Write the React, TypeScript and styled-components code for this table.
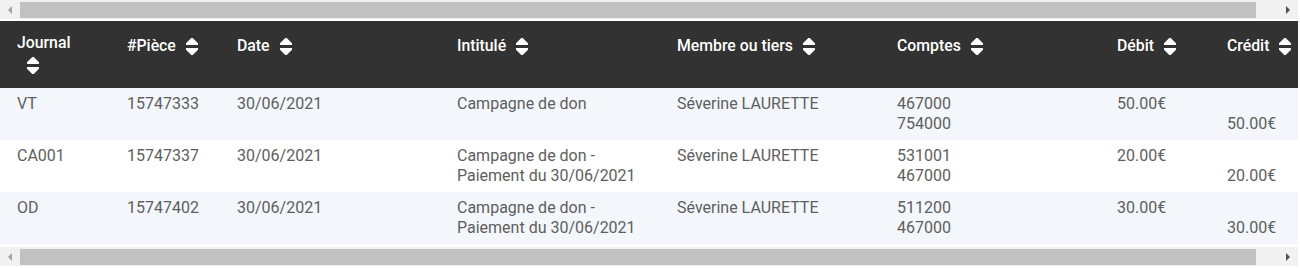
import styled, { createGlobalStyle } from "styled-components";

interface IEntry {
  journal: string;
  piece: string;
  date: string;
  label: string[];
  member: string;
  accounts: string[];
  debit: string;
  credit: string;
}

const COLUMNS = [
  { key: "journal", title: "Journal", width: 110, stacked: true },
  { key: "piece", title: "#Pièce", width: 110 },
  { key: "date", title: "Date", width: 220 },
  { key: "label", title: "Intitulé", width: 220 },
  { key: "member", title: "Membre ou tiers", width: 220 },
  { key: "accounts", title: "Comptes", width: 220 },
  { key: "debit", title: "Débit", width: 110 },
  { key: "credit", title: "Crédit", width: 110 },
];

const ENTRIES: IEntry[] = [
  {
    journal: "VT",
    piece: "15747333",
    date: "30/06/2021",
    label: ["Campagne de don"],
    member: "Séverine LAURETTE",
    accounts: ["467000", "754000"],
    debit: "50.00€",
    credit: "50.00€",
  },
  {
    journal: "CA001",
    piece: "15747337",
    date: "30/06/2021",
    label: ["Campagne de don -", "Paiement du 30/06/2021"],
    member: "Séverine LAURETTE",
    accounts: ["531001", "467000"],
    debit: "20.00€",
    credit: "20.00€",
  },
  {
    journal: "OD",
    piece: "15747402",
    date: "30/06/2021",
    label: ["Campagne de don -", "Paiement du 30/06/2021"],
    member: "Séverine LAURETTE",
    accounts: ["511200", "467000"],
    debit: "30.00€",
    credit: "30.00€",
  },
];

const SortIcon = () => (
  <SortSvg viewBox="24 64 272 384" aria-hidden>
    <path d="M41 288h238c21.4 0 32.1 25.9 17 41L177 448c-9.4 9.4-24.6 9.4-33.9 0L24 329c-15.1-15.1-4.4-41 17-41zm255-105L177 64c-9.4-9.4-24.6-9.4-33.9 0L24 183c-15.1 15.1-4.4 41 17 41h238c21.4 0 32.1-25.9 17-41z" />
  </SortSvg>
);

const ScrollBar = () => (
  <Track>
    <Arrow $dir="left" />
    <Thumb />
    <Arrow $dir="right" />
  </Track>
);

const App = () => {
  return (
    <>
      <GlobalStyle />
      <Wrapper>
        <ScrollBar />
        <Viewport>
          <Table>
            <colgroup>
              {COLUMNS.map((col) => (
                <col key={col.key} style={{ width: col.width }} />
              ))}
            </colgroup>
            <thead>
              <tr>
                {COLUMNS.map((col) => (
                  <Th key={col.key} $stacked={col.stacked}>
                    <span>{col.title}</span>
                    {col.stacked ? <br /> : null}
                    <SortIcon />
                  </Th>
                ))}
              </tr>
            </thead>
            <tbody>
              {ENTRIES.map((entry) => (
                <Tr key={entry.piece}>
                  <Td>{entry.journal}</Td>
                  <Td>{entry.piece}</Td>
                  <Td>{entry.date}</Td>
                  <Td>
                    {entry.label.map((line) => (
                      <Line key={line}>{line}</Line>
                    ))}
                  </Td>
                  <Td>{entry.member}</Td>
                  <Td>
                    {entry.accounts.map((acc) => (
                      <Line key={acc}>{acc}</Line>
                    ))}
                  </Td>
                  <Td>
                    <Line>{entry.debit}</Line>
                  </Td>
                  <Td>
                    <Line>&nbsp;</Line>
                    <Line>{entry.credit}</Line>
                  </Td>
                </Tr>
              ))}
            </tbody>
          </Table>
        </Viewport>
        <ScrollBar />
      </Wrapper>
    </>
  );
};

const GlobalStyle = createGlobalStyle`
  body {
    margin: 0;
    background: #ffffff;
    font-family: Roboto, "Liberation Sans", sans-serif;
  }
`;

const Wrapper = styled.div`
  width: 1298px;
  display: flex;
  flex-direction: column;
`;

const Track = styled.div`
  height: 19px;
  background-color: #f1f1f1;
  display: flex;
  align-items: center;
`;

const Arrow = styled.div<{ $dir: "left" | "right" }>`
  width: 20px;
  height: 19px;
  display: flex;
  align-items: center;
  justify-content: center;

  &::before {
    content: "";
    width: 0;
    height: 0;
    border-top: 4px solid transparent;
    border-bottom: 4px solid transparent;
    ${({ $dir }) =>
      $dir === "left"
        ? "border-right: 4px solid #a3a3a3;"
        : "border-left: 4px solid #505050;"}
  }
`;

const Thumb = styled.div`
  flex: 1;
  height: 16px;
  margin-right: 22px;
  background-color: #c1c1c1;
`;

const Viewport = styled.div`
  margin: 2px 0 3px;
  overflow: hidden;
  width: 1298px;
`;

const Table = styled.table`
  table-layout: fixed;
  border-collapse: collapse;
  width: 1320px;
`;

const Th = styled.th<{ $stacked?: boolean }>`
  height: 67px;
  box-sizing: border-box;
  padding: ${({ $stacked }) => ($stacked ? "11px" : "14px")} 8px 0 17px;
  vertical-align: top;
  text-align: left;
  background-color: #323232;
  color: #ffffff;
  font-size: 15.8px;
  font-weight: 500;
  line-height: 22px;
  white-space: nowrap;
`;

const SortSvg = styled.svg`
  width: 12px;
  height: 17px;
  margin-left: 10px;
  vertical-align: -4px;
  fill: #ffffff;
`;

const Tr = styled.tr`
  background-color: #ffffff;

  &:nth-child(odd) {
    background-color: #f3f7fb;
  }
`;

const Td = styled.td`
  height: 52px;
  box-sizing: border-box;
  padding: 6px 8px 6px 17px;
  vertical-align: top;
  text-align: left;
  color: #5e5e5e;
  font-size: 16px;
  line-height: 20px;
  white-space: nowrap;
`;

const Line = styled.div`
  line-height: 20px;
`;

export default App;
